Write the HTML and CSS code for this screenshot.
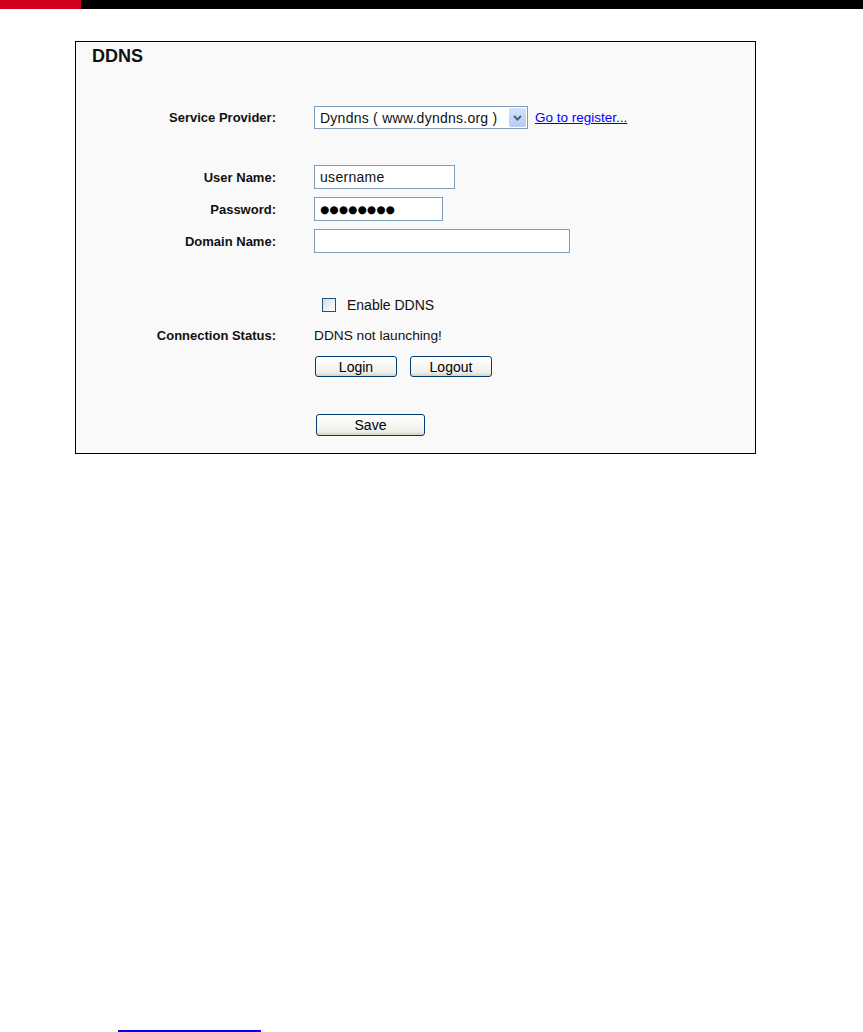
FILE: index.html
```html
<!DOCTYPE html>
<html>
<head>
<meta charset="utf-8">
<link rel="stylesheet" href="styles.css">
</head>
<body>
<div class="topbar"><div class="topbar-red"></div><div class="topbar-black"></div></div>
<div class="panel">
  <div class="panel-title">DDNS</div>
  <div class="row row-provider">
    <div class="label">Service Provider:</div>
    <div class="value">
      <div class="select">
        <span class="select-text">Dyndns ( www.dyndns.org )</span>
        <span class="select-btn"><svg width="9" height="6" viewBox="0 0 9 6"><path d="M1 1 L4.5 4.5 L8 1" fill="none" stroke="#4d6185" stroke-width="2"/></svg></span>
      </div>
      <a class="link" href="#">Go to register...</a>
    </div>
  </div>
  <div class="row row-user">
    <div class="label">User Name:</div>
    <div class="value"><div class="input input-user">username</div></div>
  </div>
  <div class="row row-pass">
    <div class="label">Password:</div>
    <div class="value"><div class="input input-pass"><span class="dots">●●●●●●●●</span></div></div>
  </div>
  <div class="row row-domain">
    <div class="label">Domain Name:</div>
    <div class="value"><div class="input input-domain"></div></div>
  </div>
  <div class="row row-check">
    <div class="label"></div>
    <div class="value"><span class="checkbox"></span><span class="check-label">Enable DDNS</span></div>
  </div>
  <div class="row row-status">
    <div class="label">Connection Status:</div>
    <div class="value"><span class="status">DDNS not launching!</span></div>
  </div>
  <div class="row row-buttons">
    <div class="label"></div>
    <div class="value"><span class="btn btn-login">Login</span><span class="btn btn-logout">Logout</span></div>
  </div>
  <div class="row row-save">
    <div class="label"></div>
    <div class="value"><span class="btn btn-save">Save</span></div>
  </div>
</div>
<div class="bottom-line"></div>
</body>
</html>
```
FILE: styles.css
```css
html, body {
  margin: 0;
  padding: 0;
  background: #ffffff;
  font-family: "Liberation Sans", Arial, sans-serif;
}
.topbar {
  display: flex;
  height: 9px;
}
.topbar-red {
  width: 81px;
  background: #d20020;
}
.topbar-black {
  flex: 1;
  background: #000000;
}
.panel {
  margin: 32px 0 0 75px;
  width: 679px;
  height: 411px;
  border: 1px solid #000000;
  background: #f9f9f9;
  box-sizing: content-box;
}
.panel-title {
  height: 28px;
  line-height: 28px;
  padding-left: 16px;
  font-size: 18px;
  font-weight: bold;
  color: #111;
}
.row {
  display: flex;
  align-items: center;
}
.label {
  width: 200px;
  flex: none;
  text-align: right;
  font-size: 13px;
  font-weight: bold;
  color: #111;
}
.value {
  margin-left: 38px;
  display: flex;
  align-items: center;
  font-size: 14px;
  color: #111;
}
.row-provider { margin-top: 36px; height: 23px; }
.row-user { margin-top: 36px; height: 24px; }
.row-pass { margin-top: 8px; height: 24px; }
.row-domain { margin-top: 8px; height: 24px; }
.row-check { margin-top: 43px; height: 18px; }
.row-status { margin-top: 13px; height: 16px; }
.row-buttons { margin-top: 13px; height: 21px; }
.row-save { margin-top: 37px; height: 22px; }

.select {
  width: 212px;
  height: 21px;
  border: 1px solid #7f9db9;
  background: #fff;
  display: flex;
  align-items: center;
  justify-content: space-between;
}
.select-text {
  padding-left: 5px;
  font-size: 14px;
  letter-spacing: 0.25px;
}
.select-btn {
  width: 17px;
  height: 19px;
  margin-right: 1px;
  background: linear-gradient(#d6e2fb, #b7cbf5);
  border-radius: 2px;
  display: flex;
  align-items: center;
  justify-content: center;
}
.link {
  margin-left: 7px;
  font-size: 13.5px;
  color: #0000ff;
  text-decoration: underline;
}
.input {
  height: 24px;
  border: 1px solid #7f9db9;
  background: #fff;
  display: flex;
  align-items: center;
  padding-left: 5px;
  box-sizing: border-box;
  font-size: 14px;
}
.input-user { width: 141px; letter-spacing: 0.3px; }
.input-pass { width: 129px; }
.input-domain { width: 256px; }
.dots {
  font-family: "DejaVu Sans", sans-serif;
  font-size: 10.5px;
  letter-spacing: 0.2px;
  color: #000;
}
.checkbox {
  width: 14px;
  height: 14px;
  margin-left: 8px;
  border: 1px solid #1c5180;
  background: linear-gradient(135deg, #dcdcd6, #ffffff);
  box-sizing: border-box;
}
.check-label {
  margin-left: 11px;
  font-size: 14px;
}
.status {
  font-size: 13.7px;
}
.btn {
  display: flex;
  align-items: center;
  justify-content: center;
  box-sizing: border-box;
  height: 21px;
  border: 1px solid #003c74;
  border-radius: 3px;
  background: linear-gradient(#ffffff, #f0f0ea 80%, #d6d0c5);
  font-size: 14px;
  color: #000;
}
.btn-login { width: 82px; margin-left: 1px; }
.btn-logout { width: 82px; margin-left: 13px; }
.btn-save { width: 109px; height: 22px; margin-left: 2px; }
.bottom-line {
  margin: 576px 0 0 118px;
  width: 143px;
  height: 2px;
  background: #0000ff;
}
```
